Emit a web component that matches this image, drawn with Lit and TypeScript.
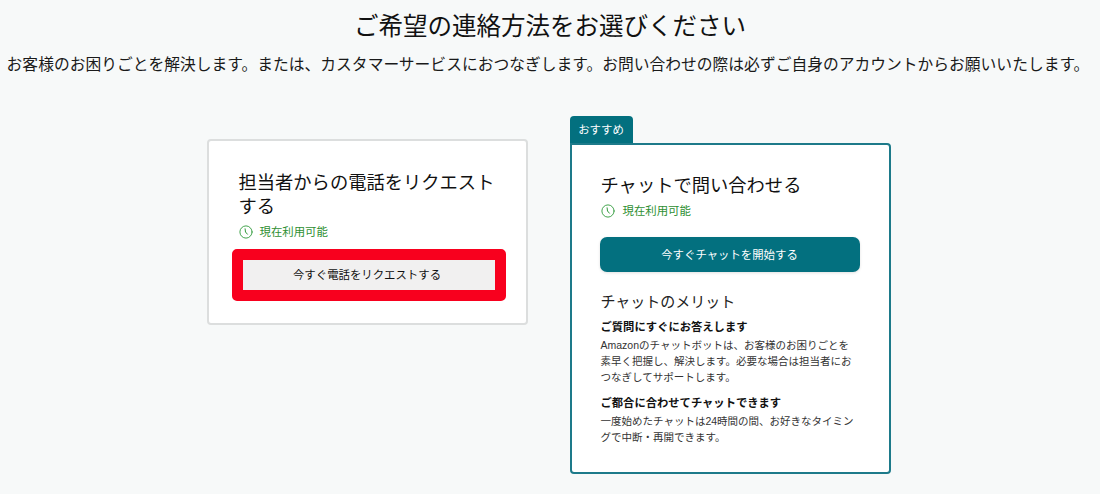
import { LitElement, html, css } from "lit";
import { customElement } from "lit/decorators.js";

const clock = html`<svg class="clock" viewBox="0 0 14 14" fill="none" stroke="#2f9a3a" stroke-linecap="round"><circle cx="7" cy="7" r="6.1" stroke-width="0.9"/><path d="M6.1 3.8 L6.5 7 L8.4 9.2" stroke-width="1"/></svg>`;

@customElement("app-root")
export class AppRoot extends LitElement {
  static styles = css`
    :host { display: block; height: 494px; overflow: hidden; background: #f7f9f9; color: #111;
      font-family: "Liberation Sans", "Noto Sans CJK JP", sans-serif; }
    .head { display: flex; flex-direction: column; align-items: center; padding-top: 11px; }
    h1 { margin: 0; font-size: 24.5px; line-height: 32px; font-weight: 400; white-space: nowrap; }
    .sub { margin: 12px 4px 0 0; padding: 0; font-size: 15.77px; line-height: 20px; color: #1a1a1a; white-space: nowrap; }
    .cols { display: flex; justify-content: center; align-items: flex-start; gap: 42px; margin-top: 41px; padding-right: 3px; }
    .left { padding-top: 23px; }
    .card { box-sizing: border-box; width: 321px; background: #fff; border-radius: 4px; }
    .plain { border: 2px solid #dcdede; height: 186px; padding: 30px 30px 0; }
    .rec { border: 2px solid #1d7a8a; border-radius: 0 4px 4px 4px; height: 331px; padding: 28px 29px 0 28px; }
    .rec h2, .rec .status { padding-left: 1px; }
    .rec h2 { line-height: 25px; }
    .rec .status { gap: 8px; margin-top: 4px; }
    .tab { box-sizing: border-box; width: 63px; height: 27px; background: #03707f; color: #fff; border-radius: 4px 4px 0 0;
      font-size: 11.4px; line-height: 28px; text-align: center; }
    h2 { margin: 0; font-size: 18.3px; line-height: 24px; font-weight: 400; }
    .status { display: flex; align-items: center; gap: 7px; margin-top: 4px; font-size: 11.4px; line-height: 18px; color: #2f8f33; }
    .clock { width: 14px; height: 14px; flex: none; }
    .btn-wrap { border: 11px solid #f8001e; border-radius: 5px; margin: 8px -10px 0 -7px; }
    .btn { box-sizing: border-box; display: flex; align-items: center; justify-content: center; font-size: 11.4px; color: #111; }
    .grey { background: #f1f0f0; height: 30px; padding: 0 3px 3px 0; }
    .teal { background: #03707f; color: #fff; height: 35px; padding-bottom: 2px; border-radius: 7px; margin-top: 17px; box-shadow: 0 1px 3px rgba(0,0,0,.12); }
    h3 { margin: 19px 0 0; padding-left: 1px; font-size: 15px; line-height: 22px; font-weight: 400; color: #222; }
    h4 { margin: 6px 0 0; padding-left: 1px; font-size: 11.3px; line-height: 17px; font-weight: 700; }
    h4.next { margin-top: 9.5px; }
    .body { margin: 1px 0 0; padding: 0 3px 0 1px; font-size: 10.5px; line-height: 16px; color: #333; }
  `;
  render() {
    return html`
      <div class="head">
        <h1>ご希望の連絡方法をお選びください</h1>
        <p class="sub">お客様のお困りごとを解決します。または、カスタマーサービスにおつなぎします。お問い合わせの際は必ずご自身のアカウントからお願いいたします。</p>
      </div>
      <div class="cols">
        <div class="left">
          <div class="card plain">
            <h2>担当者からの電話をリクエストする</h2>
            <div class="status">${clock}現在利用可能</div>
            <div class="btn-wrap"><div class="btn grey">今すぐ電話をリクエストする</div></div>
          </div>
        </div>
        <div>
          <div class="tab">おすすめ</div>
          <div class="card rec">
            <h2>チャットで問い合わせる</h2>
            <div class="status">${clock}現在利用可能</div>
            <div class="btn teal">今すぐチャットを開始する</div>
            <h3>チャットのメリット</h3>
            <h4>ご質問にすぐにお答えします</h4>
            <p class="body">Amazonのチャットボットは、お客様のお困りごとを素早く把握し、解決します。必要な場合は担当者におつなぎしてサポートします。</p>
            <h4 class="next">ご都合に合わせてチャットできます</h4>
            <p class="body">一度始めたチャットは24時間の間、お好きなタイミングで中断・再開できます。</p>
          </div>
        </div>
      </div>
    `;
  }
}
